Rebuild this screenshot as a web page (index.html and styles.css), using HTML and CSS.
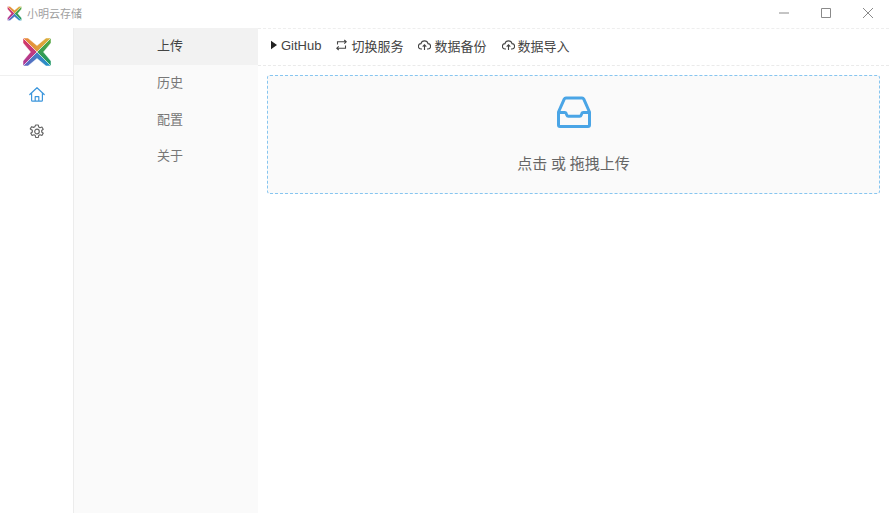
FILE: index.html
```html
<!DOCTYPE html>
<html lang="zh">
<head>
<meta charset="utf-8">
<title>小明云存储</title>
<link rel="stylesheet" href="styles.css">
</head>
<body>
<div class="app">
  <header class="titlebar">
    <div class="title">
      <svg class="title-logo" viewBox="0 0 30 30">
        <use href="#logo"/>
      </svg>
      <span>小明云存储</span>
    </div>
    <div class="win-controls">
      <svg class="win-btn" viewBox="0 0 10 10"><path d="M0 5h10"/></svg>
      <svg class="win-btn" viewBox="0 0 10 10"><path d="M.5.5h9v9h-9z"/></svg>
      <svg class="win-btn" viewBox="0 0 10 10"><path d="M0 0l10 10M10 0L0 10"/></svg>
    </div>
  </header>
  <div class="body">
    <nav class="rail">
      <div class="rail-logo">
        <svg class="logo" viewBox="0 0 30 30">
          <defs>
            <linearGradient id="gt" x1="0" y1="0" x2="1" y2="0"><stop offset="0" stop-color="#e8843a"/><stop offset="1" stop-color="#d9b23c"/></linearGradient>
            <linearGradient id="gl" x1="0" y1="0" x2="0" y2="1"><stop offset="0" stop-color="#d8385f"/><stop offset="1" stop-color="#a83a9c"/></linearGradient>
            <linearGradient id="gb" x1="0" y1="0" x2="1" y2="0"><stop offset="0" stop-color="#6a62c0"/><stop offset="1" stop-color="#1c98c8"/></linearGradient>
            <linearGradient id="gr" x1="0" y1="0" x2="0" y2="1"><stop offset="0" stop-color="#5da83c"/><stop offset="1" stop-color="#159468"/></linearGradient>
            <g id="logo" stroke="#fff" stroke-width=".5">
              <polygon points="1,1 6,1 15,8.500 24,1 29,1 15,15" fill="url(#gt)"/>
              <polygon points="1,1 1,6 8.500,15 1,24 1,29 15,15" fill="url(#gl)"/>
              <polygon points="1,29 6,29 15,21.500 24,29 29,29 15,15" fill="url(#gb)"/>
              <polygon points="29,1 29,6 21.500,15 29,24 29,29 15,15" fill="url(#gr)"/>
            </g>
          </defs>
          <use href="#logo"/>
        </svg>
      </div>
      <a class="rail-item">
        <svg class="rail-icon home" viewBox="0 0.500 16 16"><path d="M.8 8L8 1.200 15.200 8M2.600 6.600v7.200a.9.9 0 0 0 .9.9h9a.9.9 0 0 0 .9-.9V6.600M6.200 14.600v-4.400h3.600v4.400"/></svg>
      </a>
      <a class="rail-item">
        <svg class="rail-icon gear" viewBox="0 0 16 16"><path d="M6.700 1h2.600l.4 2 1.300.7 1.900-.7 1.300 2.200-1.500 1.300v1.500l1.500 1.300-1.300 2.200-1.900-.7-1.300.7-.4 2H6.700l-.4-2-1.300-.7-1.900.7-1.300-2.200 1.500-1.300V6.200L1.300 4.900l1.300-2.200 1.900.7 1.300-.7z"/><circle cx="8" cy="7.500" r="2.300"/></svg>
      </a>
    </nav>
    <aside class="submenu">
      <a class="sub-item active">上传</a>
      <a class="sub-item">历史</a>
      <a class="sub-item">配置</a>
      <a class="sub-item">关于</a>
    </aside>
    <main class="main">
      <div class="toolbar">
        <a class="tool">
          <svg class="tool-icon play" viewBox="0 0 7 10"><path d="M0 0l7 5-7 5z"/></svg>
          <span class="latin">GitHub</span>
        </a>
        <a class="tool">
          <svg class="tool-icon" viewBox="0 0 13 12"><path d="M2.500 5.500V2.800h8.500M9.300 1l1.900 1.800-1.900 1.800M10.500 6.500v2.700H2M3.700 11L1.800 9.200 3.700 7.400"/></svg>
          <span>切换服务</span>
        </a>
        <a class="tool">
          <svg class="tool-icon" viewBox="0 0 13 12"><path d="M4 10H3.200A2.700 2.700 0 0 1 3 4.600 3.600 3.600 0 0 1 10 4.600 2.700 2.700 0 0 1 9.800 10H9M6.500 11V6M4.700 7.600l1.800-1.800 1.800 1.800"/></svg>
          <span>数据备份</span>
        </a>
        <a class="tool">
          <svg class="tool-icon" viewBox="0 0 13 12"><path d="M4 10H3.200A2.700 2.700 0 0 1 3 4.600 3.600 3.600 0 0 1 10 4.600 2.700 2.700 0 0 1 9.800 10H9M6.500 11V6M4.700 7.600l1.800-1.800 1.800 1.800"/></svg>
          <span>数据导入</span>
        </a>
      </div>
      <div class="content">
        <div class="dropzone">
          <svg class="inbox" viewBox="0 0 34 33"><path d="M9 2h16a2 2 0 0 1 1.800 1.100L32.500 16v13a1.500 1.500 0 0 1-1.500 1.500H3A1.500 1.500 0 0 1 1.500 29V16L7.200 3.100A2 2 0 0 1 9 2zM1.500 16.500h6.300a1.500 1.500 0 0 1 1.400 1l.7 1.700a1.500 1.500 0 0 0 1.400 1h11.400a1.500 1.500 0 0 0 1.400-1l.7-1.700a1.500 1.500 0 0 1 1.400-1h6.300"/></svg>
          <div class="drop-text">点击 或 拖拽上传</div>
        </div>
      </div>
    </main>
  </div>
</div>
</body>
</html>
```
FILE: styles.css
```css
* { box-sizing: border-box; }
html, body { margin: 0; height: 100%; }
body {
  font-family: "Noto Sans CJK SC", "Noto Sans", sans-serif;
  background: #fff;
  color: #333;
  overflow: hidden;
}
.app { width: 889px; height: 513px; display: flex; flex-direction: column; }

.titlebar {
  height: 28px;
  flex: none;
  display: flex;
  align-items: center;
  justify-content: space-between;
  padding: 0 16px 2px 7px;
}
.title { display: flex; align-items: center; gap: 5px; font-size: 11px; color: #a0a0a0; }
.title-logo { width: 15px; height: 15px; }
.win-controls { display: flex; gap: 32px; }
.win-btn { width: 10px; height: 10px; fill: none; stroke: #8a8a8a; stroke-width: 1; }

.body { flex: 1; display: flex; min-height: 0; }

.rail {
  width: 74px;
  flex: none;
  border-right: 1px solid #ececec;
  display: flex;
  flex-direction: column;
  align-items: center;
}
.rail-logo {
  width: 100%;
  height: 48px;
  border-bottom: 1px solid #f0f0f0;
  display: flex;
  align-items: center;
  justify-content: center;
}
.logo { width: 30px; height: 30px; }
.rail-item {
  height: 37px;
  width: 100%;
  display: flex;
  align-items: center;
  justify-content: center;
}
.rail-icon { width: 16px; height: 16px; fill: none; stroke-width: 1.200; stroke-linejoin: round; stroke-linecap: round; }
.home { stroke: #3c96dc; }
.gear { stroke: #666; }

.submenu {
  width: 184px;
  flex: none;
  background: #fafafa;
  display: flex;
  flex-direction: column;
}
.sub-item {
  height: 36.700px;
  display: flex;
  align-items: center;
  justify-content: center;
  padding: 0 0 3px 8px;
  font-size: 13px;
  color: #777;
}
.sub-item.active { background: #f2f2f2; color: #444; }

.main { flex: 1; min-width: 0; display: flex; flex-direction: column; border-top: 1px dashed #eee; }
.toolbar {
  height: 37px;
  flex: none;
  display: flex;
  align-items: center;
  gap: 15px;
  padding: 0 13px 4px;
  border-bottom: 1px dashed #eaeaea;
  font-size: 13px;
  color: #444;
}
.tool { display: flex; align-items: center; gap: 3px; }
.tool-icon { width: 13px; height: 12px; fill: none; stroke: #444; stroke-width: 1.100; }
.tool-icon.play { width: 6px; height: 10px; fill: #222; stroke: none; }
.latin { font-family: "Liberation Sans", sans-serif; margin: 0 -1px 0 1px; }

.content { flex: 1; padding: 9px 9px 0; }
.dropzone {
  height: 119px;
  background: #fafafa;
  border: 1px dashed #86c5f0;
  border-radius: 3px;
  display: flex;
  flex-direction: column;
  align-items: center;
  padding-top: 20px;
}
.inbox { width: 34px; height: 33px; fill: none; stroke: #4aa5e6; stroke-width: 3; stroke-linejoin: round; }
.drop-text { margin-top: 23px; font-size: 15px; line-height: 22px; color: #666; word-spacing: .5px; }
```
